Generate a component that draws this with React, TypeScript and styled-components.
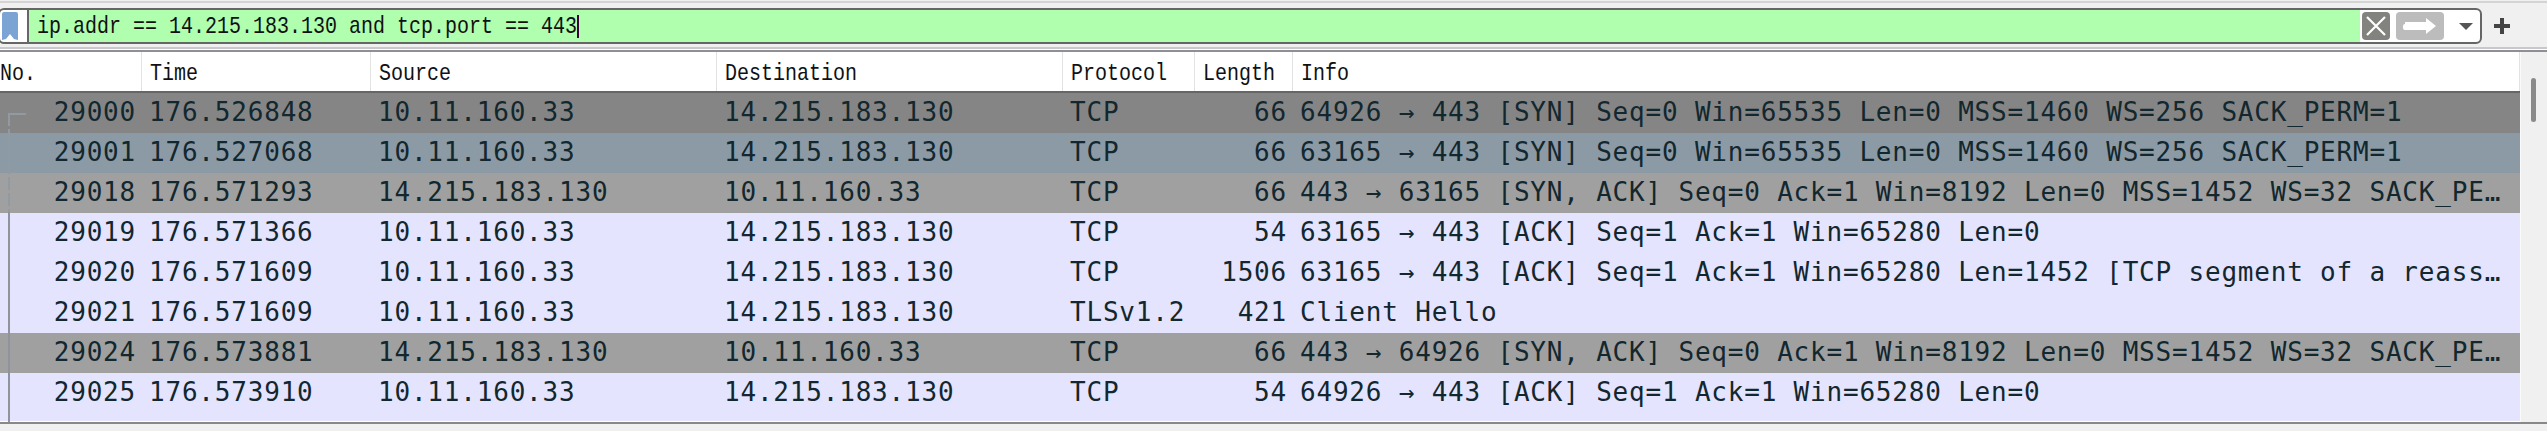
import styled, { createGlobalStyle } from 'styled-components'

const GlobalStyle = createGlobalStyle`
  html, body {
    margin: 0;
    padding: 0;
    background: #f0f0f0;
    overflow: hidden;
  }
`

const Window = styled.div`
  position: relative;
  width: 2547px;
  height: 431px;
  display: flex;
  flex-direction: column;
  background: #f0f0f0;
  overflow: hidden;
`

const TopEdge = styled.div`
  height: 7px;
  margin-top: 1px;
  flex: none;
  box-sizing: border-box;
  border-top: 2px solid #d4d4d4;
`

const FilterRow = styled.div`
  height: 36px;
  flex: none;
  display: flex;
  align-items: stretch;
  gap: 12px;
`

const FilterBox = styled.div`
  width: 2484px;
  margin-left: -2px;
  display: flex;
  align-items: stretch;
  box-sizing: border-box;
  border: 2px solid #666;
  border-radius: 6px;
  background: #fff;
`

const BookmarkSlot = styled.div`
  width: 29px;
  flex: none;
  display: flex;
  align-items: center;
  box-sizing: border-box;
  padding-left: 2px;
  border-right: 2px solid #666;
`

const FilterText = styled.div`
  flex: 1;
  background: #afffaf;
  padding-left: 8px;
  font: 20px/32px "Liberation Mono", monospace;
  color: #111;
  display: flex;
  align-items: center;
`

const TallText = styled.span`
  display: inline-block;
  transform: translateY(1px) scaleY(1.2);
  white-space: pre;
`

const Caret = styled.span`
  width: 2px;
  height: 23px;
  background: #400040;
`

const BoxButtons = styled.div`
  width: 120px;
  flex: none;
  display: flex;
  align-items: center;
  box-sizing: border-box;
  padding-left: 2px;
  gap: 6px;
`

const DropArrow = styled.svg`
  margin-left: 9px;
`

const PlusWrap = styled.div`
  display: flex;
  align-items: center;
`

const Rule = styled.div`
  height: 5px;
  margin-top: 3px;
  flex: none;
  box-sizing: border-box;
  background: #fff;
  border-top: 2px solid #c8c8c8;
  border-bottom: 2px solid #8f8f98;
`

const ListArea = styled.div`
  height: 372px;
  flex: none;
  display: flex;
  box-sizing: border-box;
  border-bottom: 2px solid #888;
`

const Table = styled.div`
  width: 2520px;
  flex: none;
  display: flex;
  flex-direction: column;
  overflow: hidden;
  background: #e4e4ff;
  border-bottom: 1px solid #fff;
  box-sizing: border-box;
`

const cols = '142px 229px 346px 346px 132px 98px 1fr'

const Header = styled.div`
  height: 41px;
  flex: none;
  display: grid;
  grid-template-columns: ${cols};
  background: #fff;
  box-sizing: border-box;
  border-bottom: 2px solid #666;
`

const HeadCell = styled.div<{ $flush?: boolean }>`
  box-sizing: border-box;
  padding-left: ${(p) => (p.$flush ? '0' : '8px')};
  border-right: 1px solid #e2e2e2;
  font: 20px/41px "Liberation Mono", monospace;
  color: #111;
  white-space: nowrap;
  overflow: hidden;
`

const Row = styled.div<{ $bg: string }>`
  height: 40px;
  flex: none;
  display: grid;
  grid-template-columns: ${cols};
  background: ${(p) => p.$bg};
  font: 26px/38px "DejaVu Sans Mono", monospace;
  letter-spacing: 0.8px;
  color: #12272e;
  white-space: nowrap;
`

const Cell = styled.div<{ $right?: boolean }>`
  padding: 0 ${(p) => (p.$right ? '6px' : '0')} 0 ${(p) => (p.$right ? '0' : '7px')};
  text-align: ${(p) => (p.$right ? 'right' : 'left')};
  overflow: hidden;
`

const Scrollbar = styled.div`
  flex: 1;
  position: relative;
  background: #f0f0f0;
  border-left: 1px solid #fafafa;
`

const Thumb = styled.div`
  position: absolute;
  left: 10px;
  top: 26px;
  width: 5px;
  height: 44px;
  border-radius: 3px;
  background: #8a8a8a;
`

// conversation marker drawn over the left edge of the list
const Trace = styled.div`
  position: absolute;
  left: 8px;
  top: 113px;
  width: 2px;
  height: 309px;
  background: linear-gradient(#8f949c, #8f949c) 0 99px / 2px 210px no-repeat,
    repeating-linear-gradient(#8f9aa2 0 13px, transparent 13px 16px) 0 0 / 2px 99px no-repeat;

  &::after {
    content: '';
    position: absolute;
    left: 0;
    top: 0;
    width: 18px;
    height: 2px;
    background: #8f9aa2;
  }
`

const headers = ['No.', 'Time', 'Source', 'Destination', 'Protocol', 'Length', 'Info']

const rows = [
  { bg: '#858585', no: '29000', time: '176.526848', src: '10.11.160.33', dst: '14.215.183.130', proto: 'TCP', len: '66', info: '64926 → 443 [SYN] Seq=0 Win=65535 Len=0 MSS=1460 WS=256 SACK_PERM=1' },
  { bg: '#8c9aa6', no: '29001', time: '176.527068', src: '10.11.160.33', dst: '14.215.183.130', proto: 'TCP', len: '66', info: '63165 → 443 [SYN] Seq=0 Win=65535 Len=0 MSS=1460 WS=256 SACK_PERM=1' },
  { bg: '#a0a0a0', no: '29018', time: '176.571293', src: '14.215.183.130', dst: '10.11.160.33', proto: 'TCP', len: '66', info: '443 → 63165 [SYN, ACK] Seq=0 Ack=1 Win=8192 Len=0 MSS=1452 WS=32 SACK_PE…' },
  { bg: '#e4e4ff', no: '29019', time: '176.571366', src: '10.11.160.33', dst: '14.215.183.130', proto: 'TCP', len: '54', info: '63165 → 443 [ACK] Seq=1 Ack=1 Win=65280 Len=0' },
  { bg: '#e4e4ff', no: '29020', time: '176.571609', src: '10.11.160.33', dst: '14.215.183.130', proto: 'TCP', len: '1506', info: '63165 → 443 [ACK] Seq=1 Ack=1 Win=65280 Len=1452 [TCP segment of a reass…' },
  { bg: '#e4e4ff', no: '29021', time: '176.571609', src: '10.11.160.33', dst: '14.215.183.130', proto: 'TLSv1.2', len: '421', info: 'Client Hello' },
  { bg: '#a0a0a0', no: '29024', time: '176.573881', src: '14.215.183.130', dst: '10.11.160.33', proto: 'TCP', len: '66', info: '443 → 64926 [SYN, ACK] Seq=0 Ack=1 Win=8192 Len=0 MSS=1452 WS=32 SACK_PE…' },
  { bg: '#e4e4ff', no: '29025', time: '176.573910', src: '10.11.160.33', dst: '14.215.183.130', proto: 'TCP', len: '54', info: '64926 → 443 [ACK] Seq=1 Ack=1 Win=65280 Len=0' },
  { bg: '#e4e4ff', no: '29026', time: '176.574107', src: '10.11.160.33', dst: '14.215.183.130', proto: 'TCP', len: '1506', info: '64926 → 443 [ACK] Seq=1 Ack=1 Win=65280 Len=1452 [TCP segment of a reass…' },
]

export default function App() {
  return (
    <Window>
      <GlobalStyle />
      <TopEdge />
      <FilterRow>
        <FilterBox>
          <BookmarkSlot>
            <svg width="16" height="28" viewBox="0 0 16 28">
              <path d="M2 0h12a2 2 0 0 1 2 2v26l-4-1-4-5-4 5-4 1V2a2 2 0 0 1 2-2z" fill="#7ba3d4" />
            </svg>
          </BookmarkSlot>
          <FilterText>
            <TallText>ip.addr == 14.215.183.130 and tcp.port == 443</TallText>
            <Caret />
          </FilterText>
          <BoxButtons>
            <svg width="28" height="28" viewBox="0 0 28 28">
              <rect width="28" height="28" rx="4" fill="#82827e" />
              <path d="M5 5l18 18M23 5L5 23" stroke="#fff" strokeWidth="2.2" />
            </svg>
            <svg width="48" height="28" viewBox="0 0 48 28">
              <rect width="48" height="28" rx="4" fill="#bcbcbc" />
              <path d="M9 10h21V6l10 8-10 8v-4H9a2 2 0 0 1-2-2v-2a2 2 0 0 1 2-2z" fill="#fff" />
            </svg>
            <DropArrow width="14" height="7" viewBox="0 0 14 7">
              <path d="M0 0h14L7 7z" fill="#555" />
            </DropArrow>
          </BoxButtons>
        </FilterBox>
        <PlusWrap>
          <svg width="16" height="16" viewBox="0 0 16 16">
            <path d="M6 0h4v6h6v4h-6v6H6v-6H0V6h6z" fill="#444" />
          </svg>
        </PlusWrap>
      </FilterRow>
      <Rule />
      <ListArea>
        <Table>
          <Header>
            {headers.map((h, i) => (
              <HeadCell key={h} $flush={i === 0}>
                <TallText>{h}</TallText>
              </HeadCell>
            ))}
          </Header>
          {rows.map((r) => (
            <Row key={r.no} $bg={r.bg}>
              <Cell $right>{r.no}</Cell>
              <Cell>{r.time}</Cell>
              <Cell>{r.src}</Cell>
              <Cell>{r.dst}</Cell>
              <Cell>{r.proto}</Cell>
              <Cell $right>{r.len}</Cell>
              <Cell>{r.info}</Cell>
            </Row>
          ))}
        </Table>
        <Scrollbar>
          <Thumb />
        </Scrollbar>
      </ListArea>
      <Trace />
    </Window>
  )
}
